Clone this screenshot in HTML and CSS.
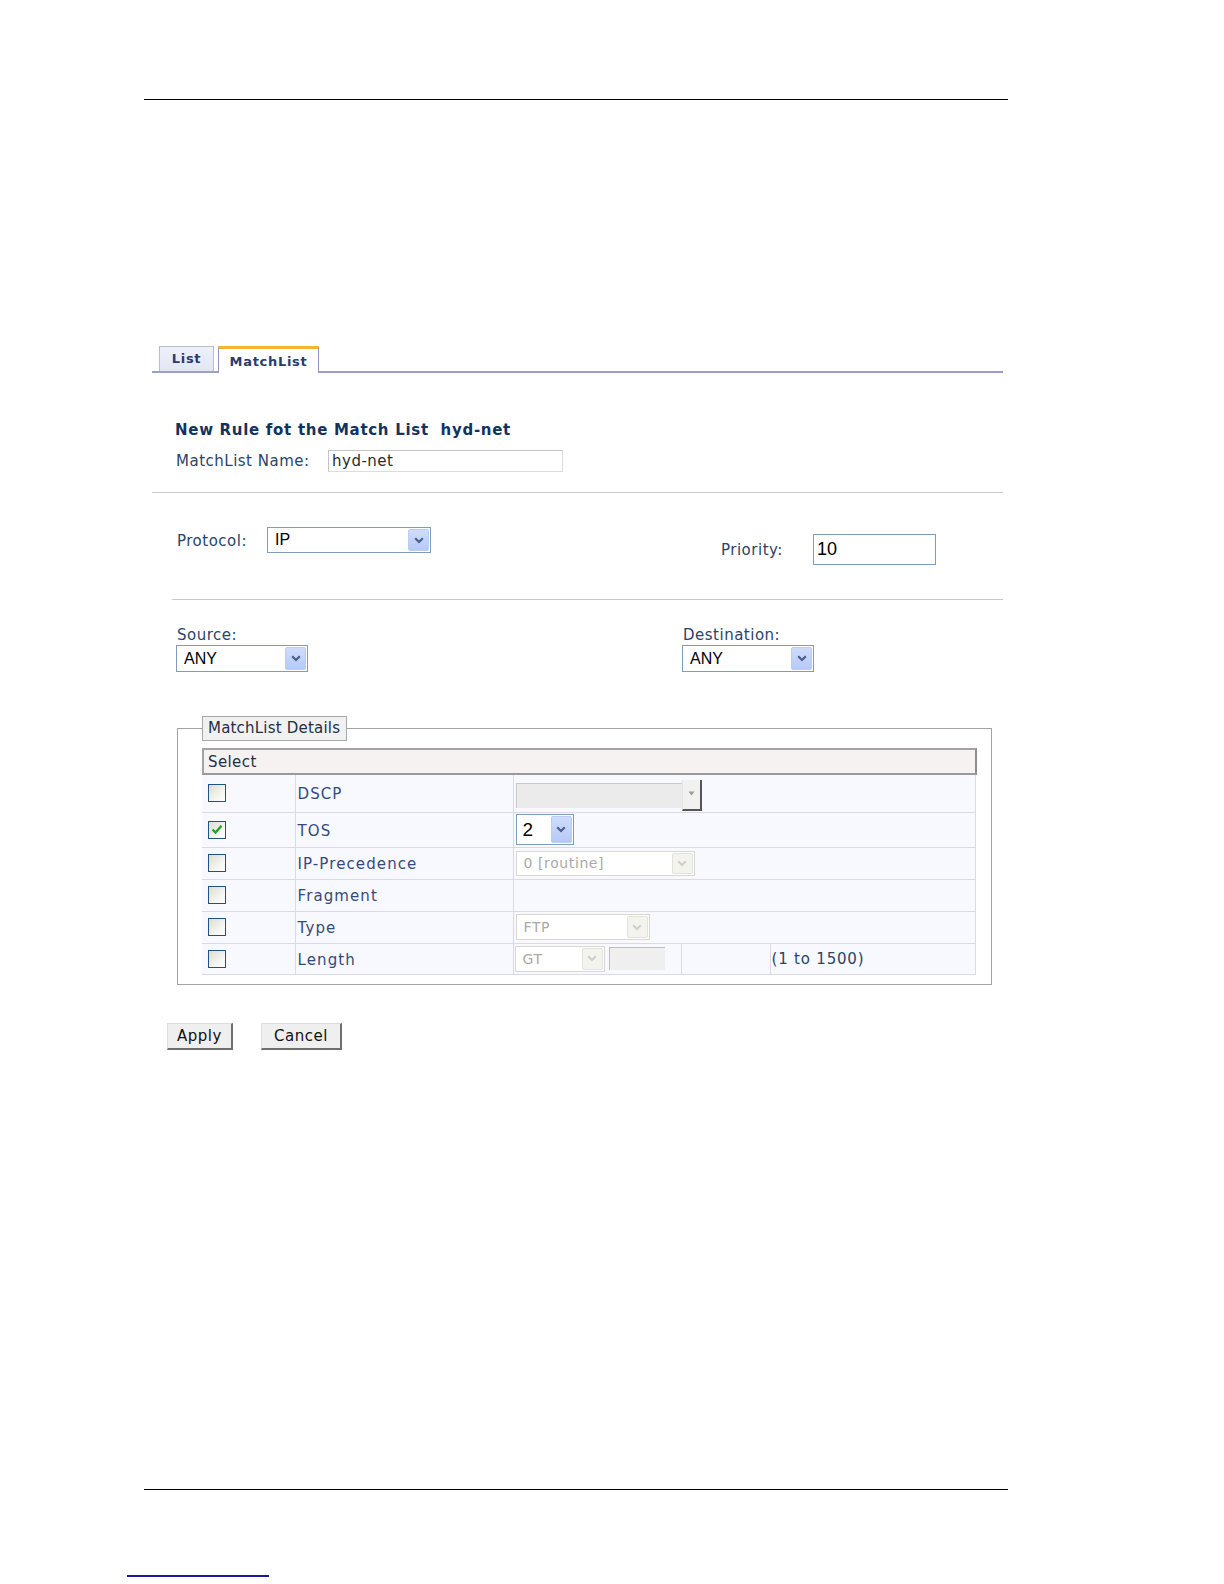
FILE: index.html
```html
<!DOCTYPE html>
<html>
<head>
<meta charset="utf-8">
<link rel="stylesheet" href="styles.css">
</head>
<body>
<div class="page">
  <div class="rule rule-top"></div>

  <div class="content">
    <div class="tabs">
      <div class="tab tab-list">List</div>
      <div class="tab tab-active">MatchList</div>
    </div>

    <div class="head-section">
      <h1 class="title">New Rule fot the Match List&nbsp; hyd-net</h1>
      <div class="name-row">
        <span class="label name-label">MatchList Name:</span>
        <div class="text-input name-input">hyd-net</div>
      </div>
    </div>

    <div class="sep sep-full"></div>

    <div class="proto-row">
      <div class="proto-left">
        <span class="label proto-label">Protocol:</span>
        <div class="xsel proto-sel">
          <span class="xsel-val">IP</span>
          <span class="xbtn"><svg width="10" height="7" viewBox="0 0 10 7"><path d="M1.2 1.3 L5 5 L8.8 1.3" stroke="#4a5f8a" stroke-width="2.2" fill="none"/></svg></span>
        </div>
      </div>
      <div class="proto-right">
        <span class="label prio-label">Priority:</span>
        <div class="prio-input">10</div>
      </div>
    </div>

    <div class="sep sep-indent"></div>

    <div class="endpoints">
      <div class="endpoint src">
        <div class="label">Source:</div>
        <div class="xsel ep-sel">
          <span class="xsel-val">ANY</span>
          <span class="xbtn"><svg width="10" height="7" viewBox="0 0 10 7"><path d="M1.2 1.3 L5 5 L8.8 1.3" stroke="#4a5f8a" stroke-width="2.2" fill="none"/></svg></span>
        </div>
      </div>
      <div class="endpoint">
        <div class="label">Destination:</div>
        <div class="xsel ep-sel">
          <span class="xsel-val">ANY</span>
          <span class="xbtn"><svg width="10" height="7" viewBox="0 0 10 7"><path d="M1.2 1.3 L5 5 L8.8 1.3" stroke="#4a5f8a" stroke-width="2.2" fill="none"/></svg></span>
        </div>
      </div>
    </div>

    <fieldset class="details">
      <legend class="legend">MatchList Details</legend>
      <div class="select-head">Select</div>
      <table class="grid">
        <colgroup>
          <col class="c1"><col class="c2"><col class="c3"><col class="c4"><col class="c5">
        </colgroup>
        <tr class="r-dscp">
          <td class="cb-cell"><span class="cb"></span></td>
          <td class="lbl">DSCP</td>
          <td class="ctl" colspan="3">
            <div class="csel">
              <span class="csel-field"></span>
              <span class="csel-btn"><svg width="7" height="5" viewBox="0 0 7 5"><path d="M0.5 0.5 L6.5 0.5 L3.5 4.5 Z" fill="#9a9a9a"/></svg></span>
            </div>
          </td>
        </tr>
        <tr class="r-tos">
          <td class="cb-cell"><span class="cb checked"><svg width="12" height="11" viewBox="0 0 12 11"><path d="M1.5 5.5 L4.5 8.5 L10.5 1.8" stroke="#22a322" stroke-width="2.4" fill="none"/></svg></span></td>
          <td class="lbl">TOS</td>
          <td class="ctl" colspan="3">
            <div class="xsel tos-sel">
              <span class="xsel-val big">2</span>
              <span class="xbtn"><svg width="10" height="7" viewBox="0 0 10 7"><path d="M1.2 1.3 L5 5 L8.8 1.3" stroke="#4a5f8a" stroke-width="2.2" fill="none"/></svg></span>
            </div>
          </td>
        </tr>
        <tr class="r-ipp">
          <td class="cb-cell"><span class="cb"></span></td>
          <td class="lbl">IP-Precedence</td>
          <td class="ctl" colspan="3">
            <div class="dsel ipp-sel">
              <span class="dsel-val">0 [routine]</span>
              <span class="dbtn"><svg width="10" height="7" viewBox="0 0 10 7"><path d="M1.2 1.3 L5 5 L8.8 1.3" stroke="#cfcfc6" stroke-width="2" fill="none"/></svg></span>
            </div>
          </td>
        </tr>
        <tr class="r-frag">
          <td class="cb-cell"><span class="cb"></span></td>
          <td class="lbl">Fragment</td>
          <td class="ctl" colspan="3"></td>
        </tr>
        <tr class="r-type">
          <td class="cb-cell"><span class="cb"></span></td>
          <td class="lbl">Type</td>
          <td class="ctl" colspan="3">
            <div class="dsel type-sel">
              <span class="dsel-val">FTP</span>
              <span class="dbtn"><svg width="10" height="7" viewBox="0 0 10 7"><path d="M1.2 1.3 L5 5 L8.8 1.3" stroke="#cfcfc6" stroke-width="2" fill="none"/></svg></span>
            </div>
          </td>
        </tr>
        <tr class="r-len">
          <td class="cb-cell"><span class="cb"></span></td>
          <td class="lbl">Length</td>
          <td class="ctl len-ctl">
            <div class="len-wrap">
              <div class="dsel gt-sel">
                <span class="dsel-val">GT</span>
                <span class="dbtn"><svg width="10" height="7" viewBox="0 0 10 7"><path d="M1.2 1.3 L5 5 L8.8 1.3" stroke="#cfcfc6" stroke-width="2" fill="none"/></svg></span>
              </div>
              <div class="len-input"></div>
            </div>
          </td>
          <td class="ctl"></td>
          <td class="ctl range">(1 to 1500)</td>
        </tr>
      </table>
    </fieldset>

    <div class="buttons">
      <button class="btn btn-apply">Apply</button>
      <button class="btn btn-cancel">Cancel</button>
    </div>
  </div>

  <div class="rule rule-bottom"></div>
  <div class="blue-line"></div>
</div>
</body>
</html>
```

FILE: styles.css
```css
* { box-sizing: border-box; }

html, body {
  margin: 0;
  padding: 0;
  background: #ffffff;
}

body {
  font-family: "DejaVu Sans", Verdana, sans-serif;
  font-size: 15px;
  color: #2b4468;
}

.page {
  padding-top: 99px;
}

.rule {
  margin-left: 144px;
  width: 864px;
  border-top: 1px solid #000;
}

.content {
  margin-left: 152px;
  width: 851px;
}

/* tabs */
.tabs {
  margin-top: 246px;
  display: flex;
  align-items: flex-end;
  padding-left: 7px;
  gap: 4px;
  border-bottom: 2px solid #9aa0c6;
  height: 27px;
}

.tab {
  font-weight: bold;
  font-size: 13px;
  letter-spacing: 0.7px;
  color: #2a3c6c;
  display: flex;
  justify-content: center;
  align-items: center;
}

.tab-list {
  width: 55px;
  height: 25px;
  background: linear-gradient(#eef0fa, #e2e6f4);
  border: 1px solid #b8bdd6;
  border-bottom: none;
  padding-bottom: 1px;
}

.tab-active {
  width: 101px;
  height: 27px;
  margin-bottom: -2px;
  background: #ffffff;
  border: 1px solid #8f96bd;
  border-top: 3px solid #f2b631;
  border-bottom: none;
  padding-top: 1px;
}

/* heading */
.head-section {
  padding-left: 23px;
  padding-top: 48px;
}

.title {
  margin: 0;
  font-size: 15px;
  line-height: 18px;
  font-weight: bold;
  letter-spacing: 0.7px;
  color: #12335f;
}

.label {
  font-size: 15px;
  letter-spacing: 0.5px;
  color: #2b4468;
  line-height: 18px;
}

.name-row {
  margin-top: 11px;
  display: flex;
  align-items: center;
  height: 22px;
}

.name-label {
  width: 153px;
  padding-left: 1px;
}

.text-input {
  font-size: 15px;
  letter-spacing: 0.5px;
  color: #2b2b2b;
}

.name-input {
  width: 235px;
  height: 22px;
  border: 1px solid #dcdcdc;
  border-top-color: #c4c4c4;
  border-left-color: #c4c4c4;
  padding: 1px 0 0 3px;
  line-height: 18px;
}

.sep {
  border-top: 1px solid #c9c9c9;
}

.sep-full {
  margin-top: 20px;
}

.sep-indent {
  margin-top: 34px;
  margin-left: 20px;
}

/* protocol row */
.proto-row {
  margin-top: 34px;
  display: flex;
  align-items: flex-start;
  height: 38px;
}

.proto-left {
  display: flex;
  align-items: center;
  padding-left: 25px;
  width: 569px;
}

.proto-label {
  width: 90px;
  padding-top: 2px;
}

.xsel {
  display: flex;
  align-items: center;
  border: 1px solid #7f9db9;
  background: #fff;
  padding: 1px;
}

.xsel-val {
  flex: 1;
  font-family: "Liberation Sans", Arial, sans-serif;
  font-size: 16px;
  color: #000;
  padding-left: 6px;
  line-height: 18px;
}

.xsel-val.big {
  font-size: 19px;
  padding-left: 5px;
}

.xbtn {
  width: 21px;
  align-self: stretch;
  display: flex;
  align-items: center;
  justify-content: center;
  background: linear-gradient(#cfdcfb, #b6c9f6);
  border: 1px solid #bccdf2;
  border-radius: 2px;
}

.proto-sel {
  width: 164px;
  height: 26px;
}

.proto-right {
  display: flex;
  align-items: center;
  margin-top: 7px;
}

.prio-label {
  width: 92px;
}

.prio-input {
  width: 123px;
  height: 31px;
  border: 1px solid #7f9db9;
  font-family: "Liberation Sans", Arial, sans-serif;
  font-size: 18px;
  color: #000;
  padding-left: 3px;
  line-height: 29px;
}

/* source / destination */
.endpoints {
  margin-top: 26px;
  display: flex;
  padding-left: 24px;
}

.endpoint .label {
  display: block;
  height: 19px;
  padding-left: 1px;
}

.src {
  width: 506px;
}

.ep-sel {
  width: 132px;
  height: 27px;
}

/* fieldset */
.details {
  margin: 44px 0 0 25px;
  width: 815px;
  border: 1px solid #a3a3a3;
  padding: 7px 13px 9px 24px;
  min-width: 0;
}

.legend {
  padding: 0 5px;
  height: 25px;
  width: 145px;
  line-height: 23px;
  white-space: nowrap;
  border: 1px solid #a8a8a8;
  background: #f1f1f1;
  font-size: 15px;
  letter-spacing: 0.2px;
  color: #1f2f45;
}

.select-head {
  height: 27px;
  width: 775px;
  border: 2px solid #a3a3a3;
  border-right-color: #8e8e8e;
  border-bottom-color: #9a9a9a;
  background: #f7f2f2;
  color: #1f2f45;
  font-size: 15px;
  letter-spacing: 0.4px;
  line-height: 24px;
  padding-left: 4px;
}

.grid {
  width: 773px;
  border-collapse: collapse;
  table-layout: fixed;
  background: #f8f8ff;
}

.c1 { width: 93px; }
.c2 { width: 218px; }
.c3 { width: 168px; }
.c4 { width: 89px; }
.c5 { width: 205px; }

.grid td {
  border: 1px solid #d9d9e8;
  padding: 0;
  vertical-align: middle;
}

.grid tr td:first-child { border-left: none; }

.r-dscp td { height: 37px; border-top: none; }
.r-tos td { height: 35px; }
.r-ipp td { height: 32px; }
.r-frag td { height: 32px; }
.r-type td { height: 32px; }
.r-len td { height: 31px; }

.cb-cell {
  padding-left: 6px !important;
}

.cb {
  display: flex;
  align-items: center;
  justify-content: center;
  width: 18px;
  height: 18px;
  border: 1px solid #1f5384;
  background: linear-gradient(135deg, #dcdcd5, #f4f4f0 60%, #ffffff);
}

.lbl {
  padding-left: 2px !important;
  padding-top: 2px !important;
  color: #354a7c;
  font-size: 15px;
  letter-spacing: 1.1px;
}

.ctl {
  padding-left: 2px !important;
}

/* classic disabled select (DSCP) */
.csel {
  display: flex;
  width: 186px;
  height: 31px;
  margin-top: 5px;
}

.csel-field {
  flex: 1;
  margin: 3px 0;
  background: #ebebeb;
  border-top: 1px solid #c8c8c8;
  border-left: 1px solid #c8c8c8;
}

.csel-btn {
  width: 20px;
  display: flex;
  justify-content: center;
  padding-top: 11px;
  background: #f1f1f1;
  border-right: 2px solid #555;
  border-bottom: 2px solid #555;
  border-left: 1px solid #e6e6e6;
}

.tos-sel {
  width: 58px;
  height: 31px;
}

/* disabled XP select */
.dsel {
  display: flex;
  align-items: center;
  border: 1px solid #dad8cc;
  background: #fff;
  padding: 1px;
}

.dsel-val {
  flex: 1;
  font-size: 14px;
  letter-spacing: 0.6px;
  color: #a9a9a9;
  padding-left: 6px;
  line-height: 18px;
}

.dbtn {
  width: 21px;
  align-self: stretch;
  display: flex;
  align-items: center;
  justify-content: center;
  background: #f4f4ef;
  border: 1px solid #e3e2da;
  border-radius: 2px;
}

.ipp-sel { width: 179px; height: 25px; }
.type-sel { width: 134px; height: 26px; }

.len-wrap {
  display: flex;
  align-items: center;
  gap: 4px;
}

.gt-sel { width: 90px; height: 26px; margin-left: -1px; }

.len-input {
  width: 56px;
  height: 23px;
  background: #efefef;
  border-top: 1px solid #bdbdbd;
  border-left: 1px solid #bdbdbd;
}

.range {
  padding-left: 1px !important;
  font-size: 15px;
  letter-spacing: 0.8px;
  color: #2b4468;
}

/* buttons */
.buttons {
  margin-top: 38px;
  padding-left: 15px;
  display: flex;
  gap: 28px;
}

.btn {
  height: 27px;
  font-family: "DejaVu Sans", Verdana, sans-serif;
  font-size: 15px;
  letter-spacing: 0.5px;
  color: #111;
  background: #efefef;
  border: 1px solid #dcdcdc;
  border-right: 2px solid #6e6e6e;
  border-bottom: 2px solid #6e6e6e;
  padding: 0;
}

.btn-apply { width: 66px; }
.btn-cancel { width: 81px; }

.rule-bottom {
  margin-top: 439px;
}

.blue-line {
  margin-top: 85px;
  margin-left: 127px;
  width: 142px;
  border-top: 2px solid #1c1c96;
}
```
